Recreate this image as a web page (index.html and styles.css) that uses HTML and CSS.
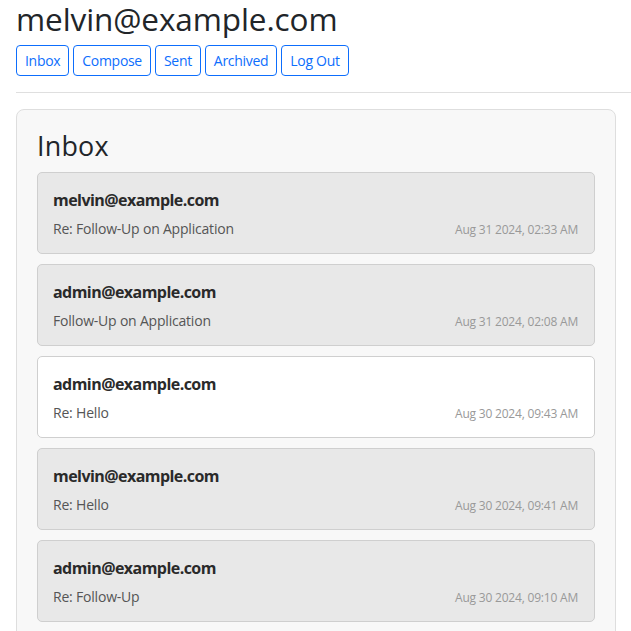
FILE: index.html
```html
<!DOCTYPE html>
<html lang="en">
<head>
<meta charset="utf-8">
<title>Inbox</title>
<link rel="stylesheet" href="styles.css">
</head>
<body>
<div class="page">
  <h1 class="user">melvin@example.com</h1>
  <nav class="nav">
    <button class="btn">Inbox</button>
    <button class="btn">Compose</button>
    <button class="btn">Sent</button>
    <button class="btn">Archived</button>
    <button class="btn">Log Out</button>
  </nav>
  <hr class="rule">
  <section class="panel">
    <h2 class="panel-title">Inbox</h2>
    <div class="mails">
      <div class="mail read">
        <div class="sender">melvin@example.com</div>
        <div class="meta"><span class="subject">Re: Follow-Up on Application</span><span class="time">Aug 31 2024, 02:33 AM</span></div>
      </div>
      <div class="mail read">
        <div class="sender">admin@example.com</div>
        <div class="meta"><span class="subject">Follow-Up on Application</span><span class="time">Aug 31 2024, 02:08 AM</span></div>
      </div>
      <div class="mail">
        <div class="sender">admin@example.com</div>
        <div class="meta"><span class="subject">Re: Hello</span><span class="time">Aug 30 2024, 09:43 AM</span></div>
      </div>
      <div class="mail read">
        <div class="sender">melvin@example.com</div>
        <div class="meta"><span class="subject">Re: Hello</span><span class="time">Aug 30 2024, 09:41 AM</span></div>
      </div>
      <div class="mail read">
        <div class="sender">admin@example.com</div>
        <div class="meta"><span class="subject">Re: Follow-Up</span><span class="time">Aug 30 2024, 09:10 AM</span></div>
      </div>
    </div>
  </section>
</div>
</body>
</html>
```
FILE: styles.css
```css
* { box-sizing: border-box; }
html, body { margin: 0; padding: 0; }
body {
  font-family: "Open Sans", "Noto Sans", sans-serif;
  color: #212529;
  background: #fff;
  overflow: hidden;
}
.page {
  padding: 0 0 0 16px;
}
.user {
  margin: 0 0 7px;
  font-size: 31.5px;
  font-weight: 500;
  line-height: 1.2;
  letter-spacing: -0.1px;
}
.nav {
  display: flex;
  gap: 4px;
}
.btn {
  font-family: inherit;
  font-size: 14px;
  line-height: 21px;
  letter-spacing: -0.3px;
  padding: 4px 8px;
  color: #0d6efd;
  background: transparent;
  border: 1px solid #0d6efd;
  border-radius: 4px;
}
.rule {
  margin: 16px 0;
  border: 0;
  border-top: 1px solid #dfdfdf;
}
.panel {
  width: 600px;
  background: #f8f8f8;
  border: 1px solid #dedede;
  border-radius: 8px;
  padding: 20px 20px 20px;
}
.panel-title {
  margin: 0 0 10px;
  font-size: 26.9px;
  font-weight: 500;
  line-height: 1.2;
  letter-spacing: 0.2px;
}
.mails {
  display: flex;
  flex-direction: column;
  gap: 10px;
}
.mail {
  background: #fff;
  border: 1px solid #cfcfcf;
  border-radius: 5px;
  padding: 15px 16px 14px 15px;
}
.mail.read { background: #e8e8e8; }
.sender {
  font-weight: 700;
  font-size: 16px;
  line-height: 24px;
  letter-spacing: -0.55px;
  color: #2a2a2a;
  margin-bottom: 6px;
}
.meta {
  display: flex;
  justify-content: space-between;
  align-items: baseline;
}
.subject {
  font-size: 14px;
  line-height: 21px;
  letter-spacing: -0.2px;
  color: #555;
}
.time {
  font-size: 12px;
  letter-spacing: -0.2px;
  color: #999;
}
```
